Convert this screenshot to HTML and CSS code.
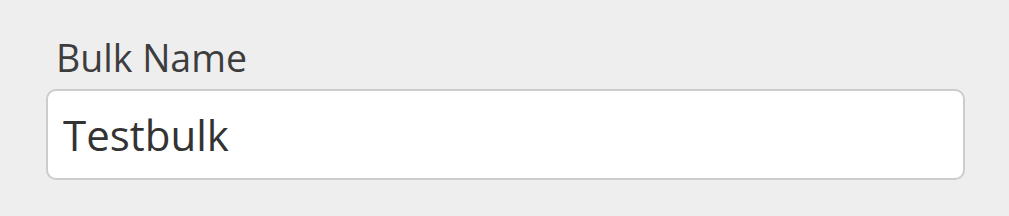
FILE: index.html
```html
<!DOCTYPE html>
<html>
<head>
<meta charset="utf-8">
<link rel="stylesheet" href="styles.css">
</head>
<body>
<div class="field">
  <label class="label" for="bulk">Bulk Name</label>
  <div class="input">Testbulk</div>
</div>
</body>
</html>
```
FILE: styles.css
```css
html, body {
  margin: 0;
  padding: 0;
  background: #eeeeee;
  width: 1009px;
  height: 216px;
  overflow: hidden;
}
.field {
  display: flex;
  flex-direction: column;
  padding: 35px 0 0 46px;
  width: 919px;
  font-family: "Open Sans", sans-serif;
}
.label {
  color: #3d3d3d;
  font-size: 37.5px;
  line-height: 46px;
  padding-left: 10px;
  margin-bottom: 8px;
}
.input {
  box-sizing: border-box;
  height: 91px;
  background: #ffffff;
  border: 2px solid #cccccc;
  border-radius: 10px;
  color: #333333;
  font-size: 42px;
  line-height: 87px;
  padding-left: 15px;
}
```
